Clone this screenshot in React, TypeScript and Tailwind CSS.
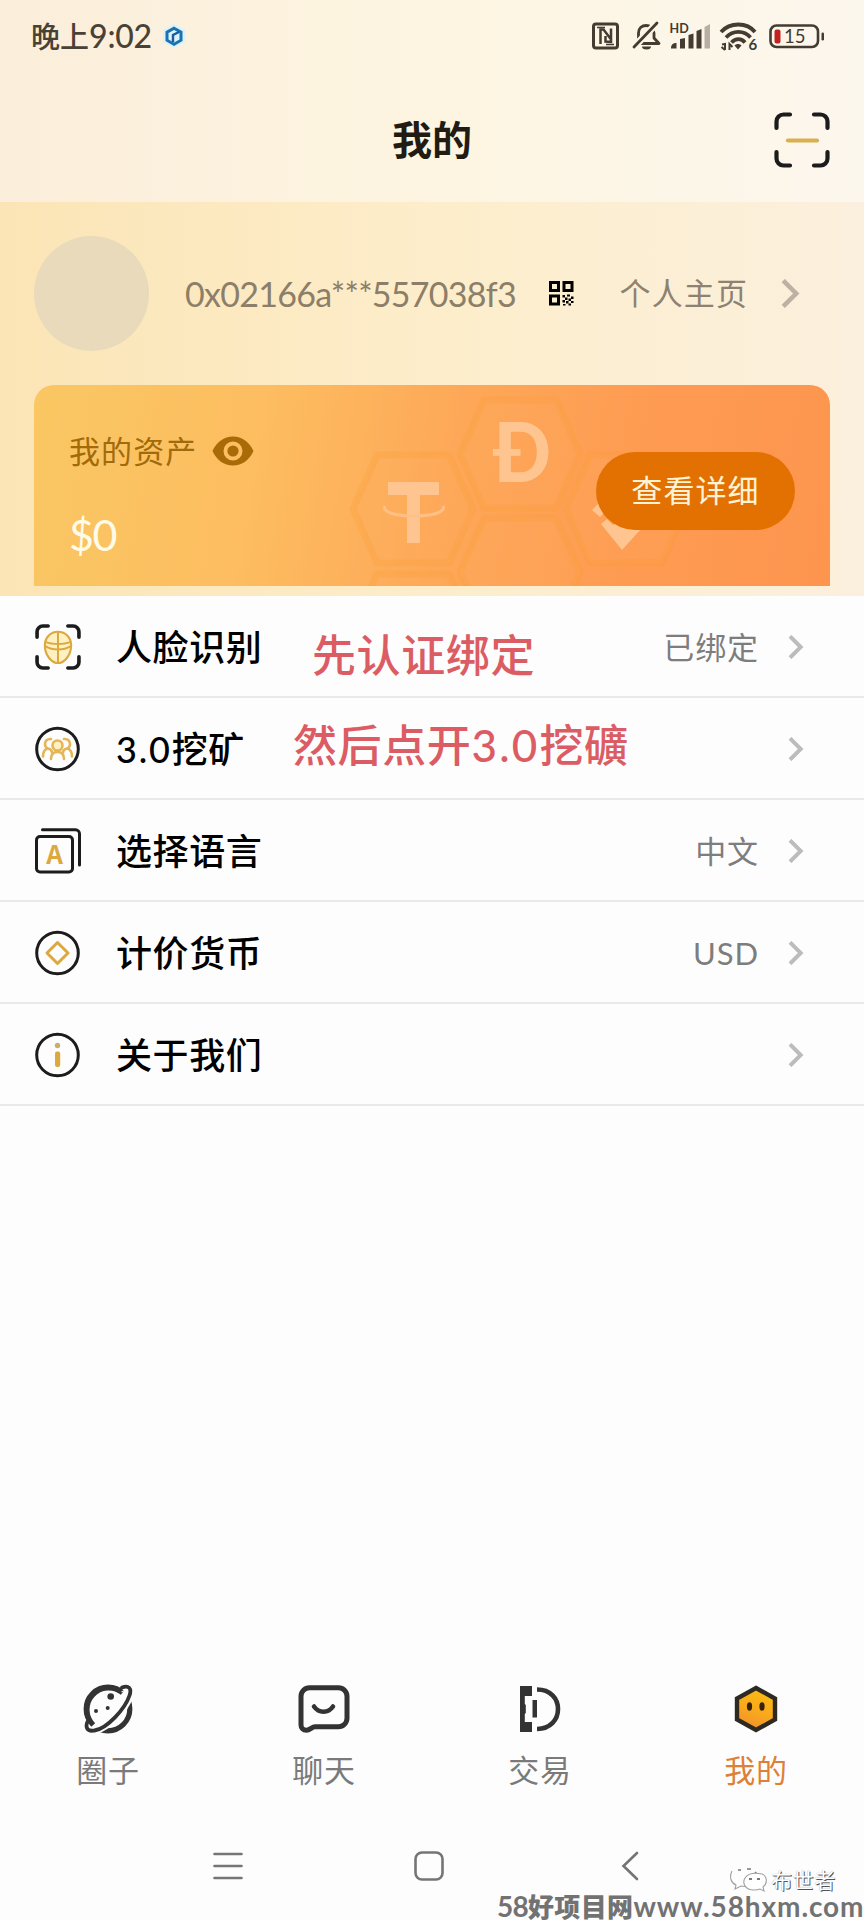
import type { ReactNode } from "react";

const INK = "#1c1c1c";
const GOLD = "#dca93f";

function Hexagon({ cx, cy }: { cx: number; cy: number }) {
  const points = [
    [cx - 60, cy],
    [cx - 36, cy - 54],
    [cx + 36, cy - 54],
    [cx + 60, cy],
    [cx + 36, cy + 54],
    [cx - 36, cy + 54],
  ]
    .map((p) => p.join(","))
    .join(" ");
  return (
    <polygon
      points={points}
      fill="#ffb066"
      fillOpacity="0.15"
      stroke="#f99a2e"
      strokeOpacity="0.22"
      strokeWidth="7"
      strokeLinejoin="round"
    />
  );
}

function CoinPattern() {
  return (
    <svg className="absolute inset-0" width="795" height="201" viewBox="0 0 795 201" fill="none">
      <Hexagon cx={379} cy={124} />
      <Hexagon cx={486} cy={69} />
      <Hexagon cx={592} cy={124} />
      <Hexagon cx={486} cy={187} />
      <Hexagon cx={379} cy={243} />
      <g fill="#ffc590">
        <path d="M354 97h51v13h-19v48h-13v-48h-19z" />
        <path d="M351 121c-3 6 10 10 29 10s32-4 29-10" stroke="#ffc088" strokeWidth="3" fill="none" />
        <path d="M558 125l7-7 8 7-7 7z" />
        <path d="M567 139l6-5 6 6 18-10 10 14-19 21z" />
      </g>
      <text x="459" y="97" fontSize="82" fontWeight="900" fill="#ffc590" fontFamily="Lato, sans-serif" textLength="58" lengthAdjust="spacingAndGlyphs">
        Ð
      </text>
    </svg>
  );
}

function StatusBar() {
  const dark = "#443b31";
  return (
    <div className="flex h-[72px] items-center justify-between pl-[31px] pr-[39px]">
      <div className="flex items-center font-medium">
        <span className="text-[29px] leading-none text-[#4a4136]">晚上</span>
        <span className="text-[32px] leading-none tracking-[-0.2px] text-[#4a4136]">9:02</span>
        <svg className="ml-[10px]" width="24" height="26" viewBox="0 0 24 26" fill="none">
          <path d="M12 1l11 6v12l-11 6-11-6V7z" fill="#d8f3fb" />
          <path d="M12 5.2l7 4v8l-7 4-7-4v-8z" stroke="#1c72ae" strokeWidth="3" />
          <path d="M11 19v-7l6-3" stroke="#1b5b9d" strokeWidth="2.400" />
        </svg>
      </div>
      <svg width="233" height="32" viewBox="0 0 233 32" fill="none">
        <rect x="1.500" y="4" width="24" height="24" rx="2.500" stroke={dark} strokeWidth="3" />
        <path d="M8.500 24V9.500h3l8 10.500M13.500 16v5.500l5.500.5V8.500" stroke={dark} strokeWidth="2.500" />
        <path d="M5 7.500h8M14 24.500h8" stroke={dark} strokeWidth="1.500" />
        <path d="M46.500 21V13c0-10 15-10 15.500 0v5l5 5.500H43.500" stroke={dark} strokeWidth="2.800" strokeLinejoin="round" />
        <path d="M41 28L65 3" stroke="#fdf6e6" strokeWidth="7" />
        <path d="M42 27L65 3" stroke={dark} strokeWidth="2.800" strokeLinecap="round" />
        <path d="M50 26.500h9a4.500 3 0 01-9 0z" fill={dark} />
        <text x="77.500" y="13" fontSize="12.500" fontWeight="700" fill={dark} fontFamily="Lato, sans-serif">HD</text>
        <g fill={dark}>
          <path d="M79 28.500c0-4 2-5.500 5.500-5.500v5.500z" />
          <path d="M88 19l5-1v10.500h-5z" />
          <path d="M96.500 15l5-1.500v15h-5z" />
          <path d="M104.500 11l5-2v19.500h-5z" />
        </g>
        <path d="M112.500 7l5.500-3v24.500h-5.500z" fill="#b8afa4" />
        <g stroke={dark} strokeWidth="3.800" fill="none">
          <path d="M129 12c9-10 26-10 34 0" />
          <path d="M134 17.500c7-7.500 18-7.500 24.500 0" />
          <path d="M139.500 22.500c4-4.500 10-4.500 13.500 0" />
        </g>
        <path d="M142.500 25.500c2-2 5-2 7 0l-3.500 4z" fill={dark} />
        <path d="M130 24.500l3-.5v6M133 30l-3.500-3M137.500 30v-6l3 3" stroke={dark} strokeWidth="2" />
        <text x="156.500" y="30" fontSize="15" fontWeight="700" fill={dark} fontFamily="Lato, sans-serif">6</text>
        <rect x="178.500" y="5.500" width="47.500" height="21.500" rx="6" stroke={dark} strokeWidth="2.600" />
        <rect x="182.500" y="9.500" width="6" height="14" rx="2" fill="#c3211f" />
        <text x="192" y="23" fontSize="18.500" fill={dark} fontFamily="Lato, sans-serif">15</text>
        <rect x="229.500" y="12.500" width="2.500" height="8" rx="1.200" fill={dark} />
      </svg>
    </div>
  );
}

function ScanFrame({ size, stroke, children }: { size: number; stroke: number; children: ReactNode }) {
  return (
    <svg width={size} height={size} viewBox="0 0 56 56" fill="none">
      <path
        d="M2.500 16V9.500a7 7 0 017-7H16M40 2.500h6.500a7 7 0 017 7V16M53.500 40v6.500a7 7 0 01-7 7H40M16 53.500H9.500a7 7 0 01-7-7V40"
        stroke={INK}
        strokeWidth={stroke}
        strokeLinecap="round"
      />
      {children}
    </svg>
  );
}

function Chevron({ width, height, color, stroke }: { width: number; height: number; color: string; stroke: number }) {
  return (
    <svg width={width} height={height} viewBox="0 0 18 28" fill="none">
      <path d="M2 1.500L14.500 14 2 26.500" stroke={color} strokeWidth={stroke} />
    </svg>
  );
}

function QrIcon() {
  return (
    <svg width="25" height="25" viewBox="0 0 25 25" fill="#000">
      <path fillRule="evenodd" d="M0 0h11v11H0zM3 3v5h5V3zM13.500 0h11v11h-11zM16.500 3v5h5V3zM0 13.500h11v11H0zM3 16.500v5h5v-5z" />
      <path d="M13.500 14h2.500v2.500h-2.500zM18 13.500h3v2h-3zM22 15.500h2.500v2.500H22zM16 16.500h2.500v2.500H16zM19.500 17.500h2.500v2.500h-2.500zM13.500 19h2.500v2.500h-2.500zM17 20h2.500v2.500H17zM22 20h2.500v2H22zM19.500 22.500h2.500v2h-2.500zM14 23h2.500v1.500H14z" />
    </svg>
  );
}

function FaceIcon() {
  return (
    <ScanFrame size={46} stroke={4.400}>
      <path d="M28 9.500c9.500 0 16 7.500 16 16.500 0 13-9 21.500-16 21.500S12 39 12 26c0-9 6.500-16.500 16-16.500z" fill="#fff0c2" stroke={GOLD} strokeWidth="2.600" />
      <path d="M28 10v37M12.500 27c9 5.500 22 5.500 31 0M13.500 22c7 3 22 3 29 0" stroke={GOLD} strokeWidth="2.400" />
    </ScanFrame>
  );
}

function CircleIcon({ children }: { children: ReactNode }) {
  return (
    <svg width="46" height="46" viewBox="0 0 46 46" fill="none">
      <circle cx="22.500" cy="23" r="20.800" stroke={INK} strokeWidth="3" />
      {children}
    </svg>
  );
}

function MiningIcon() {
  return (
    <CircleIcon>
      <g stroke="#e5b656" strokeWidth="2.600" strokeLinecap="round">
        <circle cx="22.500" cy="19.500" r="5" fill="#fff0c2" />
        <path d="M16 33c0-4 2-7 6.500-7s6.500 3 6.500 7" />
        <path d="M16 13c-4-.5-6 2-6 5 0 2 1 3.500 2.500 4.500-3 1-4.500 4-4.500 8M13 22.500c2 .5 4 2 4 4" />
        <path d="M29 13c4-.5 6 2 6 5 0 2-1 3.500-2.500 4.500 3 1 4.500 4 4.500 8M32 22.500c-2 .5-4 2-4 4" />
      </g>
    </CircleIcon>
  );
}

function LanguageIcon() {
  return (
    <svg width="46" height="46" viewBox="0 0 46 46" fill="none">
      <rect x="1.500" y="8.500" width="36" height="35.500" rx="3.500" stroke={INK} strokeWidth="3" />
      <path d="M7.500 1.800h33a4 4 0 014 4V37" stroke={INK} strokeWidth="3" strokeLinecap="round" />
      <text x="19.500" y="36" textAnchor="middle" fontSize="26" fontWeight="700" fill={GOLD} fontFamily="'Noto Sans CJK SC', sans-serif">
        A
      </text>
    </svg>
  );
}

function CurrencyIcon() {
  return (
    <CircleIcon>
      <path d="M22.500 12.500L33 23 22.500 33.500 12 23z" stroke={GOLD} strokeWidth="3" strokeLinejoin="round" />
    </CircleIcon>
  );
}

function AboutIcon() {
  return (
    <CircleIcon>
      <circle cx="22.500" cy="13.500" r="2.700" fill="#c9b06a" />
      <rect x="20" y="19.500" width="5.200" height="15.500" rx="2" fill={GOLD} />
    </CircleIcon>
  );
}

type RowProps = { icon: ReactNode; label: ReactNode; value?: string; note?: ReactNode };

function SettingRow({ icon, label, value, note }: RowProps) {
  return (
    <div className="relative flex h-[102px] items-center border-b-2 border-[#e9e9e9] pl-[35px] pr-[60px] pt-[2px]">
      {icon}
      <span className="ml-[35px] text-[36px] font-medium leading-none tracking-[0.6px] text-black">{label}</span>
      {note}
      <span className="ml-auto mr-[29px] text-[31px] leading-none tracking-[0.9px] text-[#7d7d7d]">{value}</span>
      <Chevron width={16} height={24} color="#bcbcbc" stroke={4.600} />
    </div>
  );
}

function PlanetIcon() {
  return (
    <svg width="50" height="50" viewBox="0 0 50 50" fill="none">
      <circle cx="25" cy="25" r="21.800" stroke="#333" strokeWidth="5.200" />
      <path d="M37 8C44 0 51 3 47 13 42 27 24 46 11 48 0 49 0 42 6 35z" fill="#fdfdfd" />
      <path
        d="M38.500 4.500C45.500.5 49.500 3.500 47 11.500 43 25 24 45 11 47 2.500 48 2 43 5 36.500"
        stroke="#fdfdfd"
        strokeWidth="7"
      />
      <path d="M10.200 41A21.800 21.800 0 0139.500 8.800" stroke="#333" strokeWidth="5.200" />
      <path
        d="M39 3.500C45.500 1 49 4 46.500 11.500 42 25 24 44.500 11.500 46.500 3.500 48 2 42.500 5 36.500"
        stroke="#333"
        strokeWidth="3.800"
        strokeLinecap="round"
      />
      <path d="M38.500 8l5-2.500" stroke="#fdfdfd" strokeWidth="1.200" />
      <circle cx="27.700" cy="12.500" r="3.300" fill="#333" />
      <circle cx="13" cy="27" r="2" fill="#333" />
      <circle cx="24.700" cy="24" r="2" fill="#333" />
    </svg>
  );
}

function ChatIcon() {
  return (
    <svg width="52" height="50" viewBox="0 0 52 50" fill="none">
      <path
        d="M11.500 3.800h29a8.500 8.500 0 018.500 8.500v22a8.500 8.500 0 01-8.500 8.500H17c-3 0-5 3.500-8.500 3.500S3 44 3 41V12.300a8.500 8.500 0 018.500-8.500z"
        stroke="#333"
        strokeWidth="5"
      />
      <path d="M16 22.500c5 7 14 7 19 0" stroke="#333" strokeWidth="4.600" strokeLinecap="round" />
    </svg>
  );
}

function TradeIcon() {
  return (
    <svg width="42" height="50" viewBox="0 0 42 50" fill="none">
      <path d="M1 2h12v10H5.800v8l1 1v8l-1 1v8H13V48H1z" fill="#333" />
      <path d="M13.500 16h4.500v17.500h-4.500z" fill="#333" />
      <path d="M18 5.500c13.500 0 21 9 21 19.500s-7.500 20-21 20" stroke="#333" strokeWidth="4.600" />
    </svg>
  );
}

function MineIcon() {
  return (
    <svg width="44" height="50" viewBox="0 0 44 50" fill="none">
      <defs>
        <linearGradient id="honey" x1="30" y1="4" x2="14" y2="46" gradientUnits="userSpaceOnUse">
          <stop stopColor="#fcbc10" />
          <stop offset="0.550" stopColor="#f9a91c" />
          <stop offset="1" stopColor="#f08f2e" />
        </linearGradient>
      </defs>
      <path d="M22 4l19 10.500v21L22 46 3 35.500v-21z" fill="url(#honey)" stroke="#2e2a22" strokeWidth="4.400" />
      <ellipse cx="15.500" cy="22.500" rx="2.600" ry="4.200" fill="#3a2208" />
      <ellipse cx="28" cy="22.500" rx="2.600" ry="4.200" fill="#3a2208" />
    </svg>
  );
}

function Tab({ icon, label, active }: { icon: ReactNode; label: string; active?: boolean }) {
  return (
    <div className="flex flex-col items-center pt-[2px]">
      <div className="flex h-[50px] items-center">{icon}</div>
      <span className={`mt-[20px] text-[31px] leading-[32px] tracking-[0.800px] ${active ? "text-[#dd8038]" : "text-[#7a7a7a]"}`}>
        {label}
      </span>
    </div>
  );
}

export default function App() {
  return (
    <div className="relative flex h-[1920px] w-[864px] flex-col overflow-hidden bg-[#fdfdfd] font-[Lato,'Noto_Sans_CJK_SC',sans-serif] whitespace-nowrap">
      <header className="h-[202px] bg-linear-to-r from-[#fbeedb] via-[#fdf5e1] to-[#fcf7ee]">
        <StatusBar />
        <div className="grid h-[136px] grid-cols-3 items-center pr-[34px]">
          <span />
          <h1 className="pl-[34px] text-center text-[40px] font-bold leading-none text-[#211b14]">我的</h1>
          <span className="justify-self-end">
            <ScanFrame size={56} stroke={4.200}>
              <path d="M14 28.500h29" stroke="#d9b04f" strokeWidth="4.200" strokeLinecap="round" />
            </ScanFrame>
          </span>
        </div>
      </header>

      <section className="flex h-[394px] flex-col bg-linear-to-r from-[#fbe5b6] via-[#fdedca] to-[#fbf0de] px-[34px]">
        <div className="flex h-[183px] items-center">
          <div className="h-[115px] w-[115px] rounded-full bg-[#e8dabb]" />
          <span className="ml-[36px] text-[34px] leading-none tracking-[-0.720px] text-[#8c7e68]">0x02166a***557038f3</span>
          <span className="ml-auto">
            <QrIcon />
          </span>
          <span className="ml-[46px] text-[31px] leading-none tracking-[1.100px] text-[#8d8271]">个人主页</span>
          <span className="ml-[33px] mr-[30px]">
            <Chevron width={19} height={29} color="#bcb1a3" stroke={4.400} />
          </span>
        </div>
        <div className="relative flex h-[201px] items-center justify-between overflow-hidden rounded-t-[20px] bg-linear-[100deg,#f9c763_0%,#fdbd60_28%,#fda858_52%,#fe9b52_75%,#fd954f_100%] pl-[35px] pr-[35px]">
          <CoinPattern />
          <div className="relative flex h-full flex-col pt-[49px]">
            <div className="flex items-center text-[31px] leading-[34px] tracking-[1.100px] text-[#a16b0a]">
              我的资产
              <svg className="ml-[15px]" width="42" height="30" viewBox="0 0 42 30">
                <path fillRule="evenodd" fill="#a86b08" d="M21 .5C12 .5 4.500 6 .5 15 4.500 24 12 29.500 21 29.500S37.500 24 41.500 15C37.500 6 30 .5 21 .5zM21 5.500a9.500 9.500 0 110 19 9.500 9.500 0 010-19z" />
                <circle cx="21" cy="15" r="5.600" fill="#a86b08" />
              </svg>
            </div>
            <span className="mt-[45px] text-[43px] leading-[44px] tracking-[-1.500px] text-[#fffbe8]">$0</span>
          </div>
          <button className="relative mt-[10px] flex h-[78px] w-[199px] items-center justify-center rounded-full bg-[#e27102] text-[31px] leading-none tracking-[1.100px] text-[#fff3d6]">
            查看详细
          </button>
        </div>
      </section>

      <main className="flex flex-1 flex-col">
        <SettingRow
          icon={<FaceIcon />}
          label="人脸识别"
          value="已绑定"
          note={<span className="absolute left-[312px] top-[37px] text-[44px] font-medium leading-none tracking-[0.600px] text-[#dc5c64]">先认证绑定</span>}
        />
        <SettingRow
          icon={<MiningIcon />}
          label={
            <>
              <span className="tracking-[1.800px]">3.0</span>挖矿
            </>
          }
          note={
            <span className="absolute left-[293px] top-[25px] text-[44px] font-medium leading-none tracking-[0.600px] text-[#dc5c64]">
              然后点开<span className="tracking-[2.200px]">3.0</span>挖礦
            </span>
          }
        />
        <SettingRow icon={<LanguageIcon />} label="选择语言" value="中文" />
        <SettingRow icon={<CurrencyIcon />} label="计价货币" value="USD" />
        <SettingRow icon={<AboutIcon />} label="关于我们" />
      </main>

      <nav className="grid h-[135px] grid-cols-4">
        <Tab icon={<PlanetIcon />} label="圈子" />
        <Tab icon={<ChatIcon />} label="聊天" />
        <Tab icon={<TradeIcon />} label="交易" />
        <Tab icon={<MineIcon />} label="我的" active />
      </nav>

      <div className="grid h-[103px] grid-cols-3 justify-items-center pl-[127px] pr-[134px] pt-[34px]">
        <svg width="30" height="30" viewBox="0 0 30 30">
          <path d="M1.500 3h27M1.500 15h27M1.500 27h27" stroke="#757575" strokeWidth="2.600" strokeLinecap="round" />
        </svg>
        <svg width="30" height="30" viewBox="0 0 30 30" fill="none">
          <rect x="1.500" y="1.500" width="27" height="27" rx="6.500" stroke="#757575" strokeWidth="2.600" />
        </svg>
        <svg width="18" height="30" viewBox="0 0 18 30" fill="none">
          <path d="M16 2L2.500 15 16 28" stroke="#757575" strokeWidth="2.600" strokeLinecap="round" />
        </svg>
      </div>

      <div className="absolute left-[730px] top-[1866px] flex items-center">
        <svg width="38" height="28" viewBox="0 0 38 28" fill="#fff" stroke="#a0a0a0" strokeWidth="1.100">
          <path d="M2 5C-1 11 1 17 6 19l-1 4 6-3 4 .500" />
          <path d="M8 4h3M17 3h4M25 6l3 3" stroke="#777" strokeWidth="1.500" />
          <path d="M15 12c-3 5 0 12 9 12 2 0 4 0 6-1l4 2-1-4c5-4 4-11-1-13-5-1-13-2-17 4z" />
          <path d="M19 13h3M27 13h3" stroke="#777" strokeWidth="1.800" />
        </svg>
        <span className="ml-[3px] text-[21px] leading-[26px] tracking-[0.600px] text-white [text-shadow:1px_1px_0_#555,0_0_1px_#999]">布世者</span>
      </div>
      <div className="absolute left-[497px] top-[1893px] flex items-baseline font-bold leading-[27px] text-[#727272]">
        <span className="text-[28px] tracking-[-0.800px]">58</span>
        <span className="text-[26px] font-black tracking-[0.400px]">好项目网</span>
        <span className="text-[28px] tracking-[0.900px]">www.58hxm.com</span>
      </div>
    </div>
  );
}
